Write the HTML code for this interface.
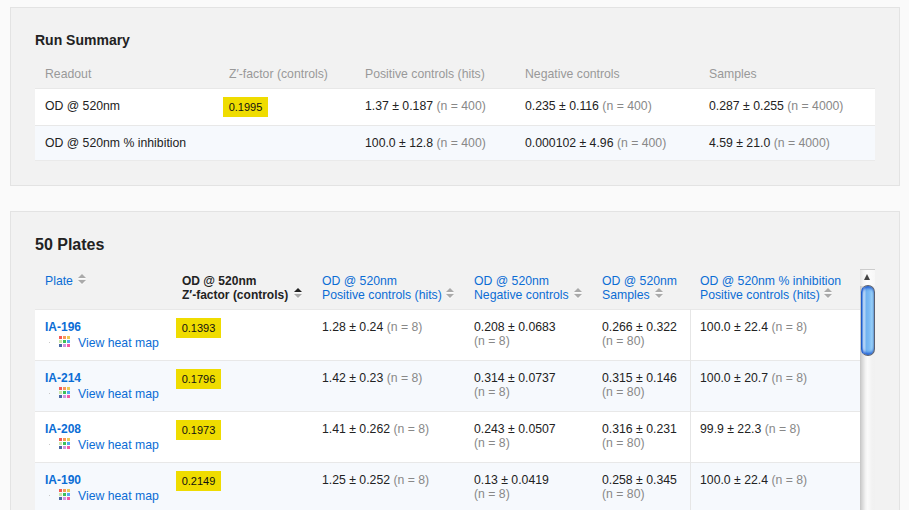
<!DOCTYPE html>
<html><head><meta charset="utf-8">
<style>
html,body{margin:0;padding:0;}
body{width:909px;height:510px;overflow:hidden;background:#fafafa;position:relative;font-family:"Liberation Sans",sans-serif;font-size:12.25px;color:#222;}
.panel{position:absolute;left:10px;width:888px;background:#f2f2f2;border:1px solid #e3e3e3;}
.h2{position:absolute;left:35px;font-weight:bold;color:#222;line-height:20px;white-space:nowrap;}
.t{position:absolute;white-space:nowrap;line-height:14px;}
.g{color:#999;}
.n{color:#888;}
.a{color:#0b6dd5;}
.b{font-weight:bold;}
.row{position:absolute;left:35px;border-top:1px solid #e8e8e8;background:#fff;}
.alt{background:#f6f9fd;}
.badge{position:absolute;background:#efdc00;color:#111;font-size:11px;line-height:20px;height:20px;width:45px;text-align:center;}
.sort{position:absolute;width:8px;height:10px;filter:drop-shadow(0 1px 0 rgba(255,255,255,.75));}
.sort:before{content:"";position:absolute;left:0;top:0;border-left:4px solid transparent;border-right:4px solid transparent;border-bottom:4px solid #aaa;}
.sort:after{content:"";position:absolute;left:0;top:6px;border-left:4px solid transparent;border-right:4px solid transparent;border-top:4px solid #aaa;}
.sort.act:before{border-bottom-color:#222;}
.hm{position:absolute;width:11px;height:11px;}
.hm i{position:absolute;width:3px;height:3px;}
.dot{position:absolute;width:1px;height:1px;background:#c8c8c8;}
</style></head><body>

<!-- Panel 1 -->
<div class="panel" style="top:7px;height:177px;"></div>
<div class="h2" style="top:30px;font-size:14px;">Run Summary</div>

<div class="t g" style="left:45px;top:67px;">Readout</div>
<div class="t g" style="left:229px;top:67px;">Z′-factor (controls)</div>
<div class="t g" style="left:365px;top:67px;">Positive controls (hits)</div>
<div class="t g" style="left:525px;top:67px;">Negative controls</div>
<div class="t g" style="left:709px;top:67px;">Samples</div>

<div class="row" style="top:88px;width:840px;height:36px;"></div>
<div class="row alt" style="top:125px;width:840px;height:34px;border-bottom:1px solid #eaeaea;"></div>

<div class="t" style="left:45px;top:99px;">OD @ 520nm</div>
<div class="badge" style="left:223px;top:97px;">0.1995</div>
<div class="t" style="left:365px;top:99px;">1.37 ± 0.187 <span class="n">(n = 400)</span></div>
<div class="t" style="left:525px;top:99px;">0.235 ± 0.116 <span class="n">(n = 400)</span></div>
<div class="t" style="left:709px;top:99px;">0.287 ± 0.255 <span class="n">(n = 4000)</span></div>

<div class="t" style="left:45px;top:136px;">OD @ 520nm % inhibition</div>
<div class="t" style="left:365px;top:136px;">100.0 ± 12.8 <span class="n">(n = 400)</span></div>
<div class="t" style="left:525px;top:136px;">0.000102 ± 4.96 <span class="n">(n = 400)</span></div>
<div class="t" style="left:709px;top:136px;">4.59 ± 21.0 <span class="n">(n = 4000)</span></div>

<!-- Panel 2 -->
<div class="panel" style="top:211px;height:400px;"></div>
<div class="h2" style="top:235px;font-size:16px;">50 Plates</div>


<!-- table 2 header -->
<div class="t a" style="left:45px;top:274px;">Plate</div>
<div class="sort" style="left:78px;top:274px;"></div>
<div class="t b" style="left:182px;top:274px;font-size:12px;">OD @ 520nm<br>Z′-factor (controls)</div>
<div class="sort act" style="left:294px;top:288px;"></div>
<div class="t a" style="left:322px;top:274px;">OD @ 520nm<br>Positive controls (hits)</div>
<div class="sort" style="left:446px;top:288px;"></div>
<div class="t a" style="left:474px;top:274px;">OD @ 520nm<br>Negative controls</div>
<div class="sort" style="left:574px;top:288px;"></div>
<div class="t a" style="left:602px;top:274px;">OD @ 520nm<br>Samples</div>
<div class="sort" style="left:655px;top:288px;"></div>
<div class="t a" style="left:700px;top:274px;">OD @ 520nm % inhibition<br>Positive controls (hits)</div>
<div class="sort" style="left:824px;top:288px;"></div>

<!-- table 2 rows -->
<div class="row" style="top:309px;width:825px;height:50px;"></div>
<div class="row alt" style="top:360px;width:825px;height:50px;"></div>
<div class="row" style="top:411px;width:825px;height:50px;"></div>
<div class="row alt" style="top:462px;width:825px;height:50px;"></div>
<div class="vl" style="left:690px;top:309px;width:1px;height:210px;background:#e6e6e6;position:absolute;"></div>

<div class="t a b" style="left:45px;top:320px;font-size:12px;">IA-196</div>
<div class="dot" style="left:49px;top:342px;"></div>
<div class="hm" style="left:59px;top:336px;"><i style="left:0px;top:0px;background:#f65a55"></i><i style="left:4px;top:0px;background:#f99a58"></i><i style="left:8px;top:0px;background:#eacb55"></i><i style="left:0px;top:4px;background:#cbe6ab"></i><i style="left:4px;top:4px;background:#3bc05a"></i><i style="left:8px;top:4px;background:#55aaf0"></i><i style="left:0px;top:8px;background:#4a68a4"></i><i style="left:4px;top:8px;background:#d293e0"></i><i style="left:8px;top:8px;background:#f35aa5"></i></div>
<div class="t a" style="left:78px;top:336px;">View heat map</div>
<div class="badge" style="left:176px;top:318px;">0.1393</div>
<div class="t" style="left:322px;top:320px;">1.28 ± 0.24 <span class="n">(n = 8)</span></div>
<div class="t" style="left:474px;top:320px;">0.208 ± 0.0683<br><span class="n">(n = 8)</span></div>
<div class="t" style="left:602px;top:320px;">0.266 ± 0.322<br><span class="n">(n = 80)</span></div>
<div class="t" style="left:700px;top:320px;">100.0 ± 22.4 <span class="n">(n = 8)</span></div>

<div class="t a b" style="left:45px;top:371px;font-size:12px;">IA-214</div>
<div class="dot" style="left:49px;top:393px;"></div>
<div class="hm" style="left:59px;top:387px;"><i style="left:0px;top:0px;background:#f65a55"></i><i style="left:4px;top:0px;background:#f99a58"></i><i style="left:8px;top:0px;background:#eacb55"></i><i style="left:0px;top:4px;background:#cbe6ab"></i><i style="left:4px;top:4px;background:#3bc05a"></i><i style="left:8px;top:4px;background:#55aaf0"></i><i style="left:0px;top:8px;background:#4a68a4"></i><i style="left:4px;top:8px;background:#d293e0"></i><i style="left:8px;top:8px;background:#f35aa5"></i></div>
<div class="t a" style="left:78px;top:387px;">View heat map</div>
<div class="badge" style="left:176px;top:369px;">0.1796</div>
<div class="t" style="left:322px;top:371px;">1.42 ± 0.23 <span class="n">(n = 8)</span></div>
<div class="t" style="left:474px;top:371px;">0.314 ± 0.0737<br><span class="n">(n = 8)</span></div>
<div class="t" style="left:602px;top:371px;">0.315 ± 0.146<br><span class="n">(n = 80)</span></div>
<div class="t" style="left:700px;top:371px;">100.0 ± 20.7 <span class="n">(n = 8)</span></div>

<div class="t a b" style="left:45px;top:422px;font-size:12px;">IA-208</div>
<div class="dot" style="left:49px;top:444px;"></div>
<div class="hm" style="left:59px;top:438px;"><i style="left:0px;top:0px;background:#f65a55"></i><i style="left:4px;top:0px;background:#f99a58"></i><i style="left:8px;top:0px;background:#eacb55"></i><i style="left:0px;top:4px;background:#cbe6ab"></i><i style="left:4px;top:4px;background:#3bc05a"></i><i style="left:8px;top:4px;background:#55aaf0"></i><i style="left:0px;top:8px;background:#4a68a4"></i><i style="left:4px;top:8px;background:#d293e0"></i><i style="left:8px;top:8px;background:#f35aa5"></i></div>
<div class="t a" style="left:78px;top:438px;">View heat map</div>
<div class="badge" style="left:176px;top:420px;">0.1973</div>
<div class="t" style="left:322px;top:422px;">1.41 ± 0.262 <span class="n">(n = 8)</span></div>
<div class="t" style="left:474px;top:422px;">0.243 ± 0.0507<br><span class="n">(n = 8)</span></div>
<div class="t" style="left:602px;top:422px;">0.316 ± 0.231<br><span class="n">(n = 80)</span></div>
<div class="t" style="left:700px;top:422px;">99.9 ± 22.3 <span class="n">(n = 8)</span></div>

<div class="t a b" style="left:45px;top:473px;font-size:12px;">IA-190</div>
<div class="dot" style="left:49px;top:495px;"></div>
<div class="hm" style="left:59px;top:489px;"><i style="left:0px;top:0px;background:#f65a55"></i><i style="left:4px;top:0px;background:#f99a58"></i><i style="left:8px;top:0px;background:#eacb55"></i><i style="left:0px;top:4px;background:#cbe6ab"></i><i style="left:4px;top:4px;background:#3bc05a"></i><i style="left:8px;top:4px;background:#55aaf0"></i><i style="left:0px;top:8px;background:#4a68a4"></i><i style="left:4px;top:8px;background:#d293e0"></i><i style="left:8px;top:8px;background:#f35aa5"></i></div>
<div class="t a" style="left:78px;top:489px;">View heat map</div>
<div class="badge" style="left:176px;top:471px;">0.2149</div>
<div class="t" style="left:322px;top:473px;">1.25 ± 0.252 <span class="n">(n = 8)</span></div>
<div class="t" style="left:474px;top:473px;">0.13 ± 0.0419<br><span class="n">(n = 8)</span></div>
<div class="t" style="left:602px;top:473px;">0.258 ± 0.345<br><span class="n">(n = 80)</span></div>
<div class="t" style="left:700px;top:473px;">100.0 ± 22.4 <span class="n">(n = 8)</span></div>

<!-- scrollbar -->
<div style="position:absolute;left:860px;top:269px;width:15px;height:250px;background:linear-gradient(to right,#c4c4c4 0px,#d2d2d2 1.5px,#e2e2e2 3.5px,#f2f2f2 5.5px,#fafafa 7.5px,#f8f8f8 9px,#f2f2f2 12px,#f1f1f1 15px);"></div>
<div style="position:absolute;left:860px;top:269px;width:15px;height:17px;background:linear-gradient(to right,#e6e6e6 0px,#f4f4f4 3px,#fdfdfd 7px,#f7f7f7 15px);border-top:1px solid #cccccc;box-sizing:border-box;"></div>
<div style="position:absolute;left:864px;top:274px;width:0;height:0;border-left:3.5px solid transparent;border-right:3.5px solid transparent;border-bottom:6px solid #454545;"></div>
<div style="position:absolute;left:861px;top:285px;width:14px;height:71px;border-radius:7px;box-sizing:border-box;border:1px solid #5a6070;border-left-color:#1e5ccc;background:linear-gradient(to right,#2a6bd8 0px,#aacdf5 1px,#b2d3f6 3px,#6fb2f0 4px,#7bbaf3 7px,#96cff9 10px,#6f9fd0 12px);box-shadow:inset 0 4px 3px -2px rgba(15,75,205,.85),inset 0 -4px 3px -2px rgba(15,75,205,.85);"></div>


</body></html>
